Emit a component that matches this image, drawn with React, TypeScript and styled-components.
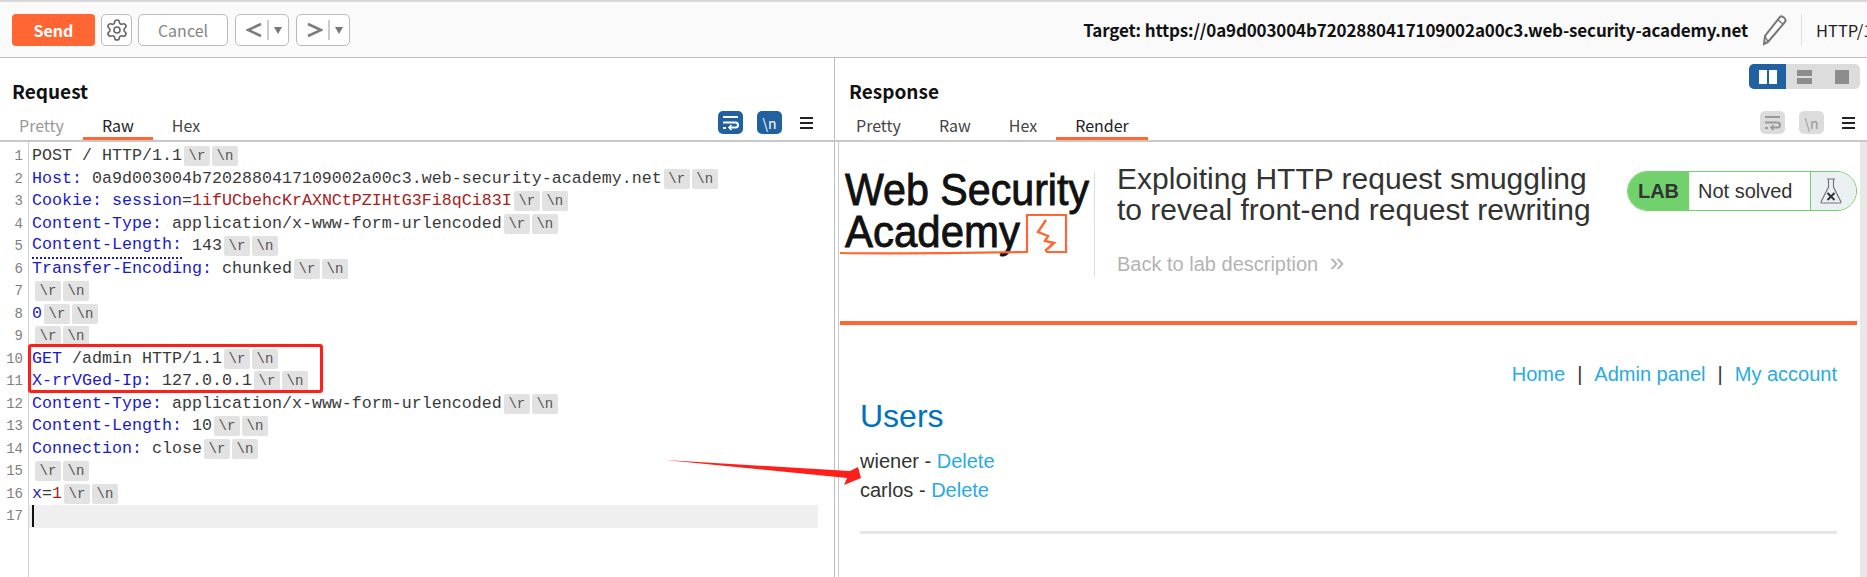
import React from 'react'
import styled, { createGlobalStyle } from 'styled-components'
import { Settings } from 'lucide-react'

type Token = { t: string; k?: 'key' | 'val' | 'red' | 'attr' | 'dot' }

const requestLines: Token[][] = [
  [{ t: 'POST / HTTP/1.1', k: 'val' }],
  [{ t: 'Host:', k: 'key' }, { t: ' 0a9d003004b7202880417109002a00c3.web-security-academy.net', k: 'val' }],
  [{ t: 'Cookie:', k: 'key' }, { t: ' ', k: 'val' }, { t: 'session', k: 'attr' }, { t: '=', k: 'val' }, { t: '1ifUCbehcKrAXNCtPZIHtG3Fi8qCi83I', k: 'red' }],
  [{ t: 'Content-Type:', k: 'key' }, { t: ' application/x-www-form-urlencoded', k: 'val' }],
  [{ t: 'Content-Length:', k: 'dot' }, { t: ' 143', k: 'val' }],
  [{ t: 'Transfer-Encoding:', k: 'key' }, { t: ' chunked', k: 'val' }],
  [],
  [{ t: '0', k: 'key' }],
  [],
  [{ t: 'GET', k: 'key' }, { t: ' /admin HTTP/1.1', k: 'val' }],
  [{ t: 'X-rrVGed-Ip:', k: 'key' }, { t: ' 127.0.0.1', k: 'val' }],
  [{ t: 'Content-Type:', k: 'key' }, { t: ' application/x-www-form-urlencoded', k: 'val' }],
  [{ t: 'Content-Length:', k: 'key' }, { t: ' 10', k: 'val' }],
  [{ t: 'Connection:', k: 'key' }, { t: ' close', k: 'val' }],
  [],
  [{ t: 'x', k: 'key' }, { t: '=', k: 'val' }, { t: '1', k: 'red' }],
]

function WrapIcon() {
  return (
    <svg width="17" height="17" viewBox="0 0 17 17" fill="none" stroke="currentColor" strokeWidth="2">
      <path d="M1 3h15M1 8.5h12.5a2.5 2.5 0 0 1 0 5H8M1 14h3" />
      <path d="M9.5 11l-2.5 2.5 2.5 2.5" strokeWidth="1.6" />
    </svg>
  )
}

function Chevron({ dir }: { dir: 'left' | 'right' }) {
  return (
    <svg width="16" height="16" viewBox="0 0 16 16" fill="none" stroke="#7d7d7d" strokeWidth="2.6">
      <path d={dir === 'left' ? 'M15 2L2 8l13 6' : 'M1 2l13 6L1 14'} />
    </svg>
  )
}

function NavButton({ dir }: { dir: 'left' | 'right' }) {
  return (
    <NavBtn>
      <Chevron dir={dir} />
      <NavDivider />
      <Caret />
    </NavBtn>
  )
}

function Hamburger() {
  return (
    <BurgerWrap>
      <span />
      <span />
      <span />
    </BurgerWrap>
  )
}

function Logo() {
  return (
    <svg width="250" height="92" viewBox="0 0 250 92">
      <text x="0" y="34" fontFamily="'Liberation Sans', sans-serif" fontSize="45" fill="#111" stroke="#111" strokeWidth="0.9" textLength="244" lengthAdjust="spacingAndGlyphs">Web Security</text>
      <text x="0" y="76" fontFamily="'Liberation Sans', sans-serif" fontSize="45" fill="#111" stroke="#111" strokeWidth="0.9" textLength="175" lengthAdjust="spacingAndGlyphs">Academy</text>
      <path d="M-5 82c60 1 120 0 187-1V44h39v37h-20" fill="none" stroke="#ff6633" strokeWidth="2.2" />
      <path d="M201 49l-8 12 10 4-3 5 9 2-9 8" fill="none" stroke="#ff6633" strokeWidth="2.4" />
    </svg>
  )
}

function Flask() {
  return (
    <svg width="24" height="28" viewBox="0 0 24 28" fill="none" stroke="#777" strokeWidth="1.2">
      <path d="M8 2h8M9.5 2v8L2 25a1 1 0 0 0 1 1h18a1 1 0 0 0 1-1L14.5 10V2" />
      <path d="M8.5 16l7 7M15.5 16l-7 7" stroke="#333" strokeWidth="2" />
    </svg>
  )
}

export default function App() {
  return (
    <>
      <GlobalStyle />
      <Page>
        <Toolbar>
          <SendButton>Send</SendButton>
          <IconButton>
            <Settings size={24} strokeWidth={1.6} color="#666" />
          </IconButton>
          <CancelButton>Cancel</CancelButton>
          <NavButton dir="left" />
          <NavButton dir="right" />
          <Target>Target: https://0a9d003004b7202880417109002a00c3.web-security-academy.net</Target>
          <svg width="28" height="32" viewBox="0 0 28 32" fill="none" stroke="#777" strokeWidth="2">
            <path d="M7 28l-4 2 1-8L19 3c2-2 7 2 5 5z" />
            <path d="M17 6l5 4M4 22l3 6" strokeWidth="1.4" />
          </svg>
          <ToolbarDivider />
          <Protocol>HTTP/1</Protocol>
        </Toolbar>

        <Split>
          <LeftPane>
            <PaneHead>
              <TitleRow>
                <PaneTitle>Request</PaneTitle>
              </TitleRow>
              <TabRow>
                <Tabs $first={0}>
                  <Tab>Pretty</Tab>
                  <Tab $active>Raw</Tab>
                  <Tab $dark>Hex</Tab>
                </Tabs>
                <Tools $right={21}>
                  <ToolBtn $on><WrapIcon /></ToolBtn>
                  <ToolBtn $on>\n</ToolBtn>
                  <Hamburger />
                </Tools>
              </TabRow>
            </PaneHead>

            <Editor>
              {requestLines.map((line, i) => (
                <Line key={i}>
                  <LineNo>{i + 1}</LineNo>
                  <Code $empty={line.length === 0}>
                    {line.map((tok, j) => (
                      <Tok key={j} $k={tok.k}>{tok.t}</Tok>
                    ))}
                    <Chip>\r</Chip>
                    <Chip>\n</Chip>
                  </Code>
                </Line>
              ))}
              <Line $current>
                <LineNo>17</LineNo>
                <Code><Cursor /></Code>
              </Line>
              <RedBox />
            </Editor>
          </LeftPane>

          <RightPane>
            <PaneHead>
              <TitleRow>
                <PaneTitle $indent={2}>Response</PaneTitle>
                <ViewToggle>
                  <ViewBtn $on>
                    <ViewPart $on /><ViewPart $on />
                  </ViewBtn>
                  <ViewBtn $column>
                    <ViewPart $wide /><ViewPart $wide />
                  </ViewBtn>
                  <ViewBtn>
                    <ViewPart $full />
                  </ViewBtn>
                </ViewToggle>
              </TitleRow>
              <TabRow>
                <Tabs $first={2}>
                  <Tab $dark>Pretty</Tab>
                  <Tab $dark>Raw</Tab>
                  <Tab $dark>Hex</Tab>
                  <Tab $active>Render</Tab>
                </Tabs>
                <Tools $right={12}>
                  <ToolBtn><WrapIcon /></ToolBtn>
                  <ToolBtn>\n</ToolBtn>
                  <Hamburger />
                </Tools>
              </TabRow>
            </PaneHead>

            <RenderFrame>
              <RenderPage>
                <LabHeader>
                  <LogoBox><Logo /></LogoBox>
                  <LabTitleBox>
                    <LabTitle>Exploiting HTTP request smuggling<br />to reveal front-end request rewriting</LabTitle>
                    <BackLink>Back to lab description <BackArrows>»</BackArrows></BackLink>
                  </LabTitleBox>
                  <Badge>
                    <BadgeLab>LAB</BadgeLab>
                    <BadgeStatus>Not solved</BadgeStatus>
                    <BadgeFlask><Flask /></BadgeFlask>
                  </Badge>
                </LabHeader>
                <OrangeRule />
                <Content>
                  <TopNav>
                    <PageLink>Home</PageLink>
                    <NavSep>|</NavSep>
                    <PageLink>Admin panel</PageLink>
                    <NavSep>|</NavSep>
                    <PageLink>My account</PageLink>
                  </TopNav>
                  <Users>Users</Users>
                  <UserRows>
                    <UserRow>wiener - <PageLink>Delete</PageLink></UserRow>
                    <UserRow>carlos - <PageLink>Delete</PageLink></UserRow>
                  </UserRows>
                  <GreyRule />
                </Content>
              </RenderPage>
              <Scrollbar />
            </RenderFrame>
          </RightPane>
        </Split>

        <ArrowOverlay width="205" height="35" viewBox="0 0 205 35">
          <polygon points="5,4 190,15 198,11 201,22 184,29 187,22" fill="#ff1f1a" />
        </ArrowOverlay>
      </Page>
    </>
  )
}

const GlobalStyle = createGlobalStyle`
  html, body {
    margin: 0;
    padding: 0;
    background: #fff;
  }
  * {
    box-sizing: border-box;
  }
`

const Page = styled.div`
  position: relative;
  width: 1867px;
  height: 577px;
  overflow: hidden;
  font-family: "Noto Sans CJK SC", "Noto Sans", sans-serif;
  border-top: 2px solid #d8d8d8;
`

const Toolbar = styled.div`
  height: 56px;
  display: flex;
  align-items: center;
  padding-left: 12px;
  gap: 6px;
  background: #fafafa;
  border-bottom: 1px solid #bdbdbd;
`

const SendButton = styled.div`
  width: 83px;
  height: 32px;
  margin-top: 1px;
  background: #ff6633;
  border-radius: 4px;
  color: #fff;
  font-size: 16px;
  font-weight: 700;
  display: flex;
  align-items: center;
  justify-content: center;
`

const OutlineBox = styled.div`
  height: 32px;
  margin-top: 1px;
  background: #fff;
  border: 1px solid #bbb;
  border-radius: 5px;
  display: flex;
  align-items: center;
  justify-content: center;
`

const IconButton = styled(OutlineBox)`
  width: 31px;
`

const CancelButton = styled(OutlineBox)`
  width: 90px;
  color: #858585;
  font-size: 16px;
`

const NavBtn = styled(OutlineBox)`
  width: 54px;
  margin-left: 1px;
  gap: 5px;
  padding-left: 3px;
`

const NavDivider = styled.div`
  width: 2px;
  height: 20px;
  background: #ccc;
`

const Caret = styled.div`
  width: 0;
  height: 0;
  border-left: 4px solid transparent;
  border-right: 4px solid transparent;
  border-top: 7px solid #777;
`

const Target = styled.div`
  margin-left: auto;
  margin-right: 7px;
  font-size: 17px;
  font-weight: 700;
  color: #111;
  white-space: nowrap;
  letter-spacing: -0.15px;
`

const ToolbarDivider = styled.div`
  width: 1px;
  height: 32px;
  margin-left: 6px;
  margin-right: 8px;
  background: #ddd;
`

const Protocol = styled.div`
  width: 51px;
  overflow: hidden;
  font-size: 16.5px;
  color: #222;
  white-space: nowrap;
`

const Split = styled.div`
  height: 519px;
  display: flex;
`

const LeftPane = styled.div`
  width: 835px;
  border-right: 1px solid #bdbdbd;
  display: flex;
  flex-direction: column;
`

const RightPane = styled.div`
  flex: 1;
  min-width: 0;
  display: flex;
  flex-direction: column;
`

const PaneHead = styled.div`
  height: 84px;
  border-bottom: 2px solid #c8c8c8;
  flex: none;
`

const TitleRow = styled.div`
  height: 47px;
  padding: 0 7px 0 12px;
  display: flex;
  justify-content: space-between;
  align-items: flex-start;
`

const PaneTitle = styled.div<{ $indent?: number }>`
  margin-top: 21px;
  margin-left: ${p => p.$indent || 0}px;
  font-size: 19px;
  line-height: 24px;
  font-weight: 700;
  color: #111;
`

const TabRow = styled.div`
  height: 35px;
  display: flex;
  align-items: stretch;
  justify-content: space-between;
`

const Tabs = styled.div<{ $first: number }>`
  display: flex;
  margin-left: ${p => p.$first}px;
`

const Tab = styled.div<{ $active?: boolean; $dark?: boolean }>`
  padding: 9px 19px 0;
  font-size: 16px;
  line-height: 22px;
  color: ${p => (p.$active ? '#222' : p.$dark ? '#444' : '#999')};
  border-bottom: 3px solid ${p => (p.$active ? '#ff6633' : 'transparent')};
`

const Tools = styled.div<{ $right: number }>`
  display: flex;
  align-items: flex-start;
  gap: 14px;
  padding-top: 6px;
  margin-right: ${p => p.$right}px;
`

const ToolBtn = styled.div<{ $on?: boolean }>`
  width: 25px;
  height: 23px;
  border-radius: 5px;
  background: ${p => (p.$on ? '#22619f' : '#dcdcdc')};
  color: ${p => (p.$on ? '#fff' : '#999')};
  font-size: 14px;
  display: flex;
  align-items: center;
  justify-content: center;
`

const BurgerWrap = styled.div`
  width: 13px;
  height: 23px;
  margin-left: 4px;
  display: flex;
  flex-direction: column;
  justify-content: center;
  gap: 3px;

  span {
    display: block;
    height: 2px;
    background: #222;
  }
`

const Editor = styled.div`
  position: relative;
  flex: 1;
  padding-top: 3px;
  font-family: "Liberation Mono", "Noto Sans CJK SC", monospace;
  font-size: 16.67px;
  background: linear-gradient(to right, #fff 28px, #d2d2d2 28px, #d2d2d2 29px, #fff 29px);
`

const Line = styled.div<{ $current?: boolean }>`
  height: 22.5px;
  line-height: 22.5px;
  display: flex;
  align-items: center;
  white-space: nowrap;
  background: ${p =>
    p.$current ? 'linear-gradient(to right, transparent 29px, #efefef 29px, #efefef 818px, transparent 818px)' : 'none'};
`

const LineNo = styled.div`
  width: 23px;
  flex: none;
  text-align: right;
  color: #808080;
  font-size: 14px;
`

const Code = styled.div<{ $empty?: boolean }>`
  margin-left: 9px;
  display: flex;
  align-items: center;
  white-space: pre;
  padding-left: ${p => (p.$empty ? '1px' : '0')};
`

const tokenColors = {
  key: '#1a1ac8',
  attr: '#1a1ac8',
  dot: '#1a1ac8',
  val: '#3a3a3a',
  red: '#a82020',
}

const Tok = styled.span<{ $k?: Token['k'] }>`
  color: ${p => tokenColors[p.$k || 'val']};
  border-bottom: ${p => (p.$k === 'dot' ? '2px dotted #1a1ac8' : 'none')};
`

const Chip = styled.span`
  width: 26px;
  height: 20px;
  margin-left: 2px;
  border-radius: 2px;
  background: #e2e2e2;
  color: #555;
  font-size: 14px;
  line-height: 20px;
  text-align: center;
  flex: none;
`

const Cursor = styled.div`
  width: 2px;
  height: 22px;
  background: #111;
`

const RedBox = styled.div`
  position: absolute;
  left: 28px;
  top: 202px;
  width: 295px;
  height: 49px;
  border: 3px solid #ff1f1a;
  border-radius: 3px;
`

const ViewToggle = styled.div`
  display: flex;
  height: 25px;
  margin-top: 6px;
  border-radius: 5px;
  overflow: hidden;
  background: #dcdcdc;
`

const ViewBtn = styled.div<{ $on?: boolean; $column?: boolean }>`
  width: 37px;
  display: flex;
  flex-direction: ${p => (p.$column ? 'column' : 'row')};
  align-items: center;
  justify-content: center;
  gap: 2px;
  background: ${p => (p.$on ? '#22619f' : 'transparent')};
`

const ViewPart = styled.div<{ $on?: boolean; $wide?: boolean; $full?: boolean }>`
  width: ${p => (p.$full ? '14px' : p.$wide ? '15px' : '8px')};
  height: ${p => (p.$full ? '14px' : p.$wide ? '6px' : '14px')};
  background: ${p => (p.$on ? '#fff' : '#8c8c8c')};
`

const RenderFrame = styled.div`
  flex: 1;
  min-height: 0;
  display: flex;
  margin-left: 3px;
  border-left: 1px solid #c8c8c8;
`

const RenderPage = styled.div`
  flex: 1;
  min-width: 0;
  margin-right: 3px;
  padding-left: 1px;
  font-family: "Liberation Sans", Arial, sans-serif;
`

const Scrollbar = styled.div`
  width: 7px;
  background: #e8e8e8;
`

const LabHeader = styled.div`
  height: 179px;
  display: flex;
  align-items: flex-start;
`

const LogoBox = styled.div`
  width: 255px;
  height: 106px;
  margin-top: 29px;
  padding-left: 5px;
  border-right: 1px solid #ddd;
  flex: none;

  svg {
    overflow: visible;
  }
`

const LabTitleBox = styled.div`
  margin-left: 22px;
  padding-top: 21px;
`

const LabTitle = styled.div`
  font-size: 30px;
  line-height: 31px;
  color: #333332;
  white-space: nowrap;
`

const BackLink = styled.div`
  margin-top: 28px;
  font-size: 20px;
  line-height: 23px;
  color: #b3b3b3;
  white-space: nowrap;
`

const BackArrows = styled.span`
  margin-left: 6px;
  font-size: 26px;
  line-height: 18px;
`

const Badge = styled.div`
  width: 230px;
  height: 40px;
  margin-top: 29px;
  margin-left: auto;
  border: 1px solid #70d16d;
  border-radius: 20px;
  overflow: hidden;
  display: flex;
  align-items: stretch;
  font-size: 20px;
`

const BadgeLab = styled.div`
  width: 61px;
  background: #70d16d;
  color: #333332;
  font-weight: 700;
  display: flex;
  align-items: center;
  justify-content: center;
`

const BadgeStatus = styled.div`
  flex: 1;
  padding-left: 9px;
  background: #fff;
  color: #333332;
  display: flex;
  align-items: center;
`

const BadgeFlask = styled.div`
  width: 46px;
  background: #ebf0f2;
  border-left: 1px solid #70d16d;
  display: flex;
  align-items: center;
  padding-left: 8px;
`

const OrangeRule = styled.div`
  height: 4px;
  background: #ff6633;
`

const Content = styled.div`
  padding: 0 20px;
`

const TopNav = styled.div`
  padding-top: 38px;
  margin-bottom: 12px;
  display: flex;
  justify-content: flex-end;
  font-size: 20px;
  line-height: 23px;
  gap: 12px;
`

const PageLink = styled.span`
  color: #29abe2;
`

const NavSep = styled.span`
  color: #333;
`

const Users = styled.div`
  font-size: 32px;
  line-height: 36px;
  color: #0071bc;
`

const UserRows = styled.div`
  margin-top: 13px;
`

const UserRow = styled.div`
  font-size: 20px;
  line-height: 28.5px;
  color: #333332;
`

const GreyRule = styled.div`
  height: 3px;
  margin-top: 27px;
  background: #e6e6e6;
`

const ArrowOverlay = styled.svg`
  position: absolute;
  left: 660px;
  top: 454px;
  pointer-events: none;
`
